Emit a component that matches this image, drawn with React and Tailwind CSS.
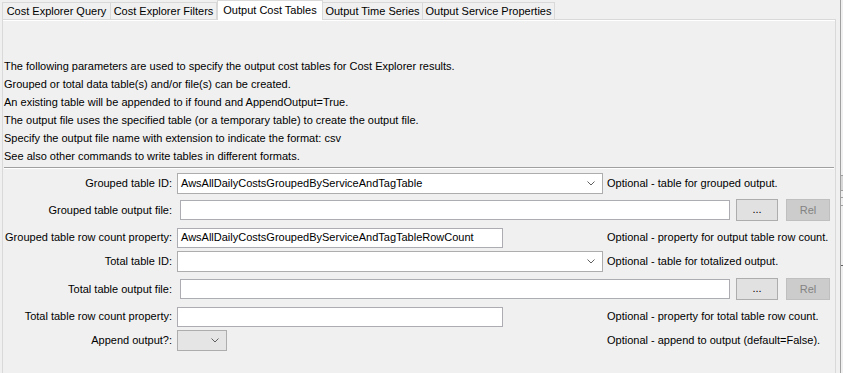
import React from 'react';

const tabs = [
  { name: 'Cost Explorer Query', w: 109 },
  { name: 'Cost Explorer Filters', w: 107 },
  { name: 'Output Cost Tables', w: 106, active: true },
  { name: 'Output Time Series', w: 101 },
  { name: 'Output Service Properties', w: 133 },
];

const notes = [
  'The following parameters are used to specify the output cost tables for Cost Explorer results.',
  'Grouped or total data table(s) and/or file(s) can be created.',
  'An existing table will be appended to if found and AppendOutput=True.',
  'The output file uses the specified table (or a temporary table) to create the output file.',
  'Specify the output file name with extension to indicate the format: csv',
  'See also other commands to write tables in different formats.',
];

function Chevron() {
  return (
    <svg width="8" height="5" viewBox="0 0 8 5" className="shrink-0">
      <polyline points="0.5,0.5 4,4 7.5,0.5" fill="none" stroke="#606060" strokeWidth="1" />
    </svg>
  );
}

function Label({ children }) {
  return <div className="w-[168px] shrink-0 text-right whitespace-nowrap">{children}</div>;
}

function Combo({ value, width, gray }) {
  return (
    <div
      className={`h-[21px] flex items-center justify-between pl-[3px] pr-[7px] border ${gray ? 'bg-[#e5e5e5] border-[#adadad]' : 'bg-white border-[#adadad]'}`}
      style={{ width }}
    >
      <span className="whitespace-nowrap">{value}</span>
      <Chevron />
    </div>
  );
}

function TextField({ value, width }) {
  return (
    <div className="h-[20px] flex items-center pl-[3px] bg-white border border-[#abadb3] whitespace-nowrap overflow-hidden" style={{ width }}>
      {value}
    </div>
  );
}

function FileButtons() {
  return (
    <>
      <div className="ml-[6px] w-[42px] h-[22px] flex items-center justify-center bg-[#e1e1e1] border border-[#adadad] pb-[2px]">...</div>
      <div className="ml-[8px] w-[44px] h-[22px] flex items-center justify-center bg-[#cccccc] border border-[#bfbfbf] text-[#838383]">Rel</div>
    </>
  );
}

export default function App() {
  return (
    <div className="w-[843px] h-[373px] bg-[#f0f0f0] flex overflow-hidden text-[11px] text-black" style={{ fontFamily: '"Liberation Sans", Arial, sans-serif' }}>
      <div className="w-[836px] flex flex-col">
        {/* tabs */}
        <div className="h-[19px] flex items-end pl-[2px] relative z-10">
          {tabs.map(t =>
            t.active ? (
              <div key={t.name} className="h-[20px] -mb-[1px] bg-white border border-b-0 border-[#d9d9d9] flex items-start justify-center pt-[1px] whitespace-nowrap" style={{ width: t.w }}>
                {t.name}
              </div>
            ) : (
              <div key={t.name} className="h-[17px] border border-b-0 border-[#d9d9d9] -ml-[1px] first:ml-0 flex items-center justify-center whitespace-nowrap" style={{ width: t.w }}>
                {t.name}
              </div>
            )
          )}
        </div>
        {/* panel */}
        <div className="ml-[2px] flex-1 border-t border-l border-r border-[#d9d9d9] flex flex-col">
          <div className="border-t border-white pt-[36px] pl-[1px] flex flex-col">
            {notes.map(n => (
              <div key={n} className="h-[18px] leading-[18px] whitespace-nowrap">{n}</div>
            ))}
            <div className="mt-[2px] mr-[1px] border-t border-[#a0a0a0] border-b border-b-white" />

            <div className="mt-[4px] h-[21px] flex items-center">
              <Label>Grouped table ID:</Label>
              <div className="w-[435px] shrink-0 pl-[5px]"><Combo width={426} value="AwsAllDailyCostsGroupedByServiceAndTagTable" /></div>
              <span className="whitespace-nowrap">Optional - table for grouped output.</span>
            </div>

            <div className="mt-[5px] h-[22px] flex items-center">
              <Label>Grouped table output file:</Label>
              <div className="ml-[8px]"><TextField width={550} /></div>
              <FileButtons />
            </div>

            <div className="mt-[6px] h-[21px] flex items-center">
              <Label>Grouped table row count property:</Label>
              <div className="w-[435px] shrink-0 pl-[5px]"><TextField width={326} value="AwsAllDailyCostsGroupedByServiceAndTagTableRowCount" /></div>
              <span className="whitespace-nowrap">Optional - property for output table row count.</span>
            </div>

            <div className="mt-[3px] h-[21px] flex items-center">
              <Label>Total table ID:</Label>
              <div className="w-[435px] shrink-0 pl-[5px]"><Combo width={426} value="" /></div>
              <span className="whitespace-nowrap">Optional - table for totalized output.</span>
            </div>

            <div className="mt-[6px] h-[22px] flex items-center">
              <Label>Total table output file:</Label>
              <div className="ml-[8px]"><TextField width={550} /></div>
              <FileButtons />
            </div>

            <div className="mt-[6px] h-[21px] flex items-center">
              <Label>Total table row count property:</Label>
              <div className="w-[435px] shrink-0 pl-[5px]"><TextField width={326} /></div>
              <span className="whitespace-nowrap">Optional - property for total table row count.</span>
            </div>

            <div className="mt-[3px] h-[21px] flex items-center">
              <Label>Append output?:</Label>
              <div className="w-[435px] shrink-0 pl-[5px]"><Combo width={50} value="" gray /></div>
              <span className="whitespace-nowrap">Optional - append to output (default=False).</span>
            </div>
          </div>
        </div>
      </div>
      {/* neighbouring window edge */}
      <div className="w-[7px] flex">
        <div className="w-[4px]" />
        <div className="w-[3px] border-l border-[#a0a0a0] bg-[#f0f0f0] flex flex-col">
          <div className="h-[175px]" />
          <div className="h-[15px] border-t border-[#a0a0a0] bg-[#d8d8d8]" />
          <div className="h-[7px] border-t border-[#a0a0a0]" />
          <div className="h-[8px] border-t border-[#a0a0a0]" />
          <div className="h-[60px] border-t border-[#a0a0a0]" />
          <div className="h-[10px] border-t border-[#606060]" />
        </div>
      </div>
    </div>
  );
}
